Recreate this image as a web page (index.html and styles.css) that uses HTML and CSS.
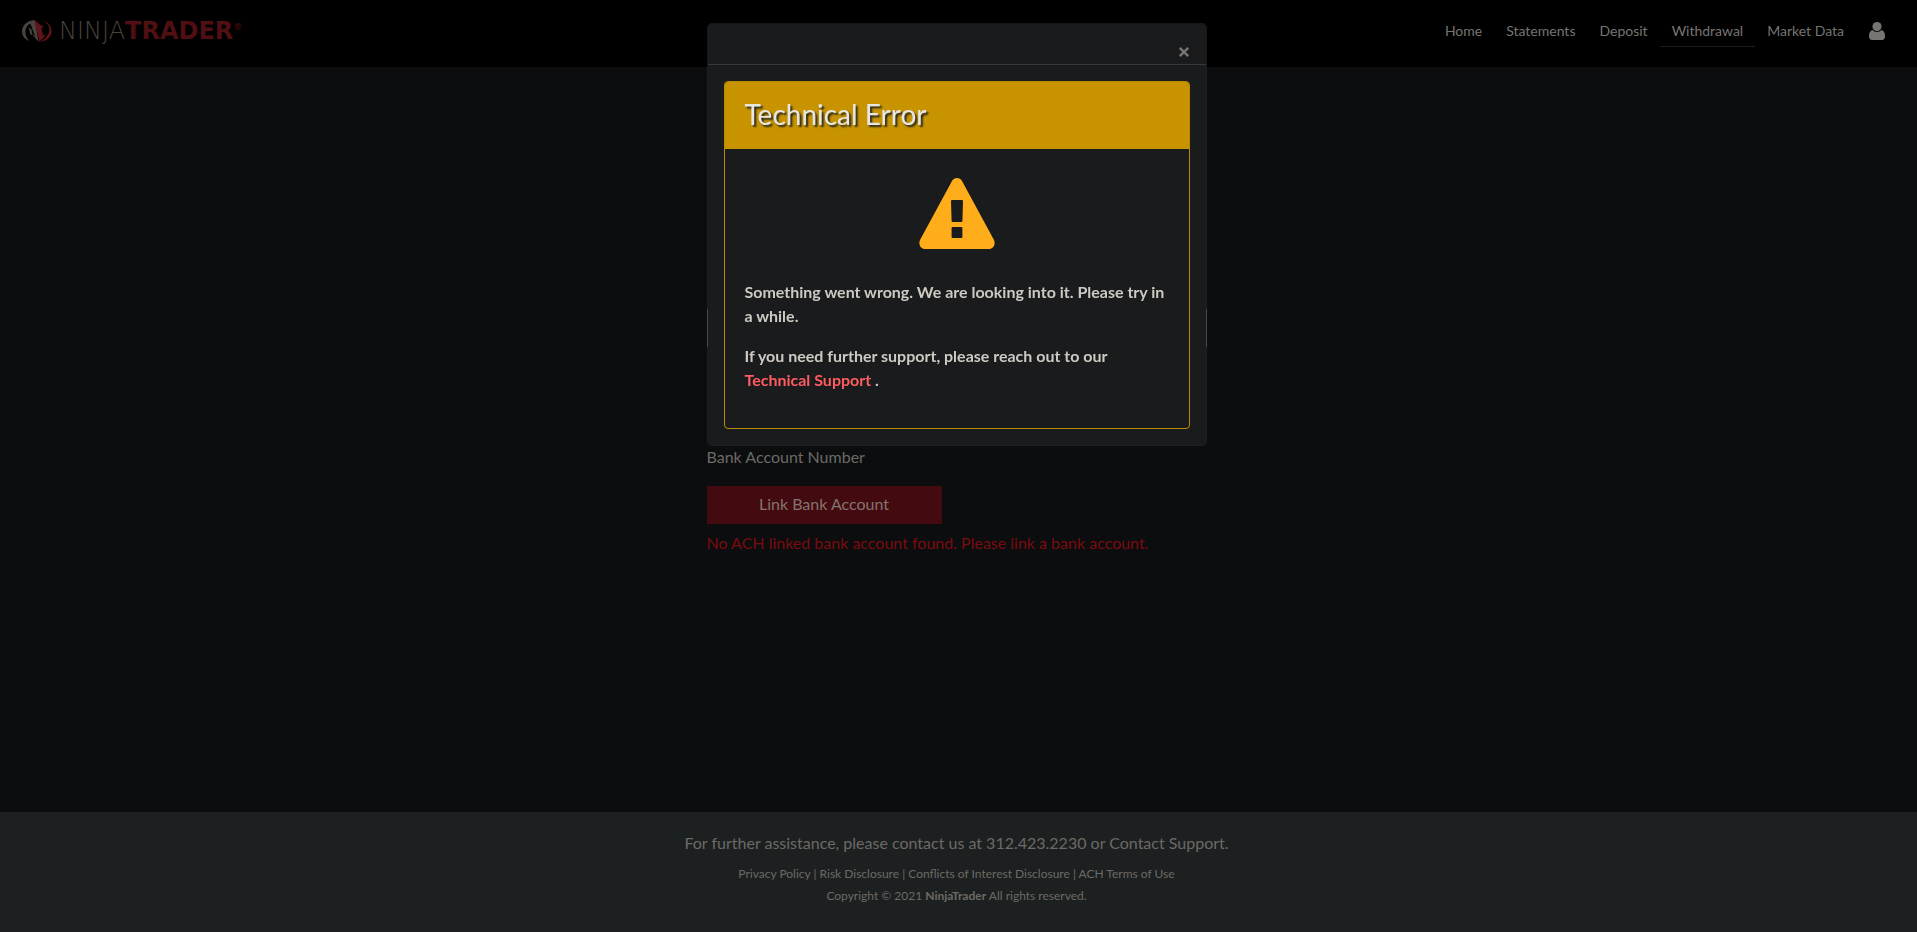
FILE: index.html
```html
<!DOCTYPE html>
<html lang="en">
<head>
<meta charset="utf-8">
<title>NinjaTrader</title>
<link rel="stylesheet" href="styles.css">
</head>
<body>
<header class="topbar">
  <a class="logo" href="#">
    <svg class="logo-mark" viewBox="0 0 30 24" aria-hidden="true">
      <path fill="#4a423c" d="M12.500 1C5 1.500 0 6.500 0 12.500C0 17 3 20.500 7.500 22C4 18.500 2.500 14 4 9.500C5 7 6.500 5 8.500 5L13 17L10 15L16.500 23L14 7Z"/>
      <path fill="#4a423c" d="M6.500 8L9.500 10.500L10.500 16L8.500 15.500Z"/>
      <path fill="#63131a" d="M12.500 1L19.500 7L22 6.500L19.500 9.500L20.500 19L17.500 23Z"/>
      <path fill="#63131a" d="M20.500 1.500C26.500 3 30 8 29.500 13C29 18 25 22 18 23C23 20 27.500 16 27.500 10.500C27.500 6.500 24.500 3.500 20.500 1.500Z"/>
      <path fill="#63131a" d="M20.500 12L22 17L25 14L20 21Z"/>
    </svg>
    <span class="wordmark"><span class="word-ninja">NINJA</span><span class="word-trader">TRADER</span><sup class="word-reg">®</sup></span>
  </a>
  <nav class="nav">
    <a class="nav-link" href="#">Home</a>
    <a class="nav-link" href="#">Statements</a>
    <a class="nav-link" href="#">Deposit</a>
    <a class="nav-link nav-link-active" href="#">Withdrawal</a>
    <a class="nav-link" href="#">Market Data</a>
    <button class="user-button" type="button" aria-label="Account">
      <svg class="user-icon" viewBox="0 0 16 18" aria-hidden="true">
        <path d="M3.500 8C1 8.500 0 11 0 14.500C0 16.500 1.300 18 3 18H13C14.700 18 16 16.500 16 14.500C16 11 15 8.500 12.500 8C11.300 9.300 9.800 10 8 10C6.200 10 4.700 9.300 3.500 8Z"/>
        <circle cx="8" cy="4.600" r="4.600"/>
      </svg>
    </button>
  </nav>
</header>

<main class="content">
  <form class="form">
    <input class="field" type="text" aria-label="Amount">
    <p class="form-label">Bank Account Number</p>
    <button class="link-button" type="button">Link Bank Account</button>
    <p class="form-error">No ACH linked bank account found. Please link a bank account.</p>
  </form>
</main>

<footer class="footer">
  <p class="footer-help">For further assistance, please contact us at 312.423.2230 or <a href="#">Contact Support.</a></p>
  <p class="footer-small"><a href="#">Privacy Policy</a> | <a href="#">Risk Disclosure</a> | <a href="#">Conflicts of Interest Disclosure</a> | <a href="#">ACH Terms of Use</a></p>
  <p class="footer-small">Copyright © 2021 <strong>NinjaTrader</strong> All rights reserved.</p>
</footer>

<div class="overlay">
  <section class="modal" role="dialog" aria-labelledby="modal-title">
    <div class="modal-header">
      <button class="modal-close" type="button" aria-label="Close">
        <svg class="close-icon" viewBox="0 0 10 10" aria-hidden="true"><path d="M1.500 1.500L8.500 8.500M8.500 1.500L1.500 8.500"/></svg>
      </button>
    </div>
    <div class="modal-body">
      <div class="card">
        <h1 class="card-title" id="modal-title">Technical Error</h1>
        <div class="card-body">
          <svg class="warning-icon" viewBox="0 0 76 71" aria-hidden="true">
            <path fill-rule="evenodd" d="M33 3C34 1 36 0 38 0C40 0 42 1 43 3L75 62C77 66.500 74 71 70 71H6C2 71 -1 66.500 1 62ZM33 22Q32 22 32 23L32.600 43Q32.600 44 33.600 44H42.400Q43.400 44 43.400 43L44 23Q44 22 43 22ZM33.600 49Q32.600 49 32.600 50V59Q32.600 60 33.600 60H42.400Q43.400 60 43.400 59V50Q43.400 49 42.400 49Z"/>
          </svg>
          <p class="card-text">Something went wrong. We are looking into it. Please try in a while.</p>
          <p class="card-text">If you need further support, please reach out to our <a class="support-link" href="#">Technical Support</a> .</p>
        </div>
      </div>
    </div>
  </section>
</div>
</body>
</html>
```
FILE: styles.css
```css
* {
  box-sizing: border-box;
}

body {
  margin: 0;
  min-height: 100vh;
  display: flex;
  flex-direction: column;
  background: #0b0d0e;
  color: #6c6a66;
  font-family: "Lato", "Liberation Sans", sans-serif;
  font-size: 16px;
  line-height: 24px;
}

p,
h1 {
  margin: 0;
}

a {
  color: inherit;
  text-decoration: none;
}

button {
  border: 0;
  padding: 0;
  background: none;
  color: inherit;
  font: inherit;
  cursor: pointer;
}

.topbar {
  display: flex;
  justify-content: space-between;
  align-items: flex-start;
  height: 67px;
  padding: 15px 32px 0 22px;
  background: #000;
}

.logo {
  display: flex;
  align-items: center;
  gap: 7px;
  height: 32px;
}

.logo-mark {
  width: 30px;
  height: 24px;
}

.wordmark {
  display: flex;
  align-items: flex-start;
  font-family: "DejaVu Sans", sans-serif;
  font-size: 24px;
  line-height: 32px;
}

.word-ninja {
  color: #4a423c;
  font-weight: 200;
}

.word-trader {
  color: #4f0f13;
  font-weight: 700;
}

.word-reg {
  color: #5c1116;
  font-size: 9px;
  line-height: 24px;
}

.nav {
  display: flex;
  align-items: center;
  height: 32px;
  font-size: 14px;
}

.nav-link {
  height: 32px;
  padding: 0 12px;
  line-height: 31px;
  color: #777572;
  border-bottom: 1px solid transparent;
}

.nav-link-active {
  border-bottom-color: #1d1d1d;
}

.user-button {
  display: flex;
  margin-left: 13px;
}

.user-icon {
  width: 16px;
  height: 18px;
  fill: #777572;
}

.content {
  flex: 1;
  display: flex;
  justify-content: center;
  padding: 242px 4px 0 0;
}

.form {
  width: 500px;
}

.field {
  display: block;
  width: 100%;
  height: 38px;
  margin-bottom: 98px;
  border: 1px solid #55524e;
  background: transparent;
}

.form-label {
  margin-bottom: 17px;
}

.link-button {
  display: block;
  width: 235px;
  height: 38px;
  margin-bottom: 7px;
  padding-bottom: 2px;
  background: #430b0f;
  color: #85736f;
}

.form-error {
  color: #7c0b10;
}

.footer {
  padding: 19px 4px 25px 0;
  background: #1d2020;
  text-align: center;
}

.footer-help {
  margin-bottom: 8px;
}

.footer-small {
  font-size: 12px;
  line-height: 22px;
}

.overlay {
  position: fixed;
  inset: 0;
  display: flex;
  justify-content: center;
  align-items: flex-start;
  padding: 23px 4px 0 0;
}

.modal {
  width: 500px;
  border: 1px solid rgba(60, 60, 60, 0.4);
  border-radius: 5px;
  background: #1a1b1c;
  background-clip: padding-box;
}

.modal-header {
  display: flex;
  justify-content: flex-end;
  align-items: flex-end;
  height: 41px;
  padding: 0 16px 6px;
  border-bottom: 1px solid #363a3a;
}

.modal-close {
  display: flex;
}

.close-icon {
  width: 12px;
  height: 12px;
  fill: none;
  stroke: #777572;
  stroke-width: 2;
}

.modal-body {
  padding: 16px;
}

.card {
  border: 1px solid #b98a04;
  border-radius: 4px;
  overflow: hidden;
}

.card-title {
  padding: 15px 20px 17px;
  background: #c79400;
  color: #e8e6e0;
  font-size: 28px;
  font-weight: 400;
  line-height: 35px;
  text-shadow: 2px 2px 2px #222;
}

.card-body {
  padding: 29px 20px 20px;
}

.warning-icon {
  display: block;
  width: 76px;
  height: 71px;
  margin: 0 auto 31px;
  fill: #ffad1a;
}

.card-text {
  margin-bottom: 16px;
  color: #cdc9c3;
  font-weight: 700;
}

.support-link {
  color: #ff5c61;
}
```
